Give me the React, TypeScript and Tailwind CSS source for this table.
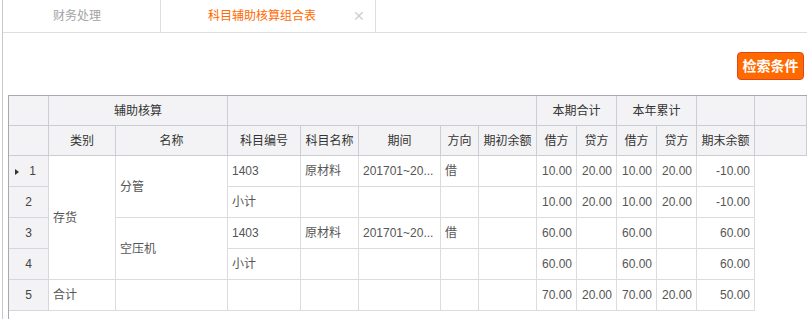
import React from "react";

const font = { fontFamily: '"Liberation Sans", "Noto Sans CJK SC", sans-serif' };

function H({ children, className = "" }: { children?: React.ReactNode; className?: string }) {
  return (
    <div
      className={
        "bg-[#f3f3f5] border-r border-b border-[#cbcdd4] text-[#333] text-[12px] flex items-center justify-center overflow-hidden whitespace-nowrap " +
        className
      }
    >
      {children}
    </div>
  );
}

function RH({ children, className = "" }: { children?: React.ReactNode; className?: string }) {
  return (
    <div
      className={
        "bg-[#f3f3f5] border-r border-b border-[#d6d7dd] text-[#444] text-[12px] flex items-center justify-center " +
        className
      }
    >
      {children}
    </div>
  );
}

function D({
  children,
  className = "",
  right = false,
}: {
  children?: React.ReactNode;
  className?: string;
  right?: boolean;
}) {
  return (
    <div
      className={
        "border-r border-b border-[#dcdcdf] text-[#555] text-[12px] flex items-center px-[4px] overflow-hidden whitespace-nowrap " +
        (right ? "justify-end " : "justify-start ") +
        className
      }
    >
      {children}
    </div>
  );
}

type Row = {
  code?: string;
  name?: string;
  period?: string;
  dir?: string;
  v: (string | undefined)[];
};

export default function App() {
  const rows: Row[] = [
    { code: "1403", name: "原材料", period: "201701~20...", dir: "借", v: ["10.00", "20.00", "10.00", "20.00", "-10.00"] },
    { code: "小计", v: ["10.00", "20.00", "10.00", "20.00", "-10.00"] },
    { code: "1403", name: "原材料", period: "201701~20...", dir: "借", v: ["60.00", "", "60.00", "", "60.00"] },
    { code: "小计", v: ["60.00", "", "60.00", "", "60.00"] },
    { v: ["70.00", "20.00", "70.00", "20.00", "50.00"] },
  ];

  return (
    <div className="w-[807px] h-[319px] overflow-hidden bg-white pl-[2px]" style={font}>
      <div className="h-full border-l border-[#c8c8cc] flex flex-col">
        {/* tab bar */}
        <div className="h-[33px] border-b border-[#dedee2] flex shrink-0">
          <div className="w-[158px] border-r border-[#dedee2] flex items-center pl-[50px] text-[12px] text-[#a3a3a3]">
            财务处理
          </div>
          <div className="w-[215px] border-r border-[#dedee2] flex items-center pl-[47px] pr-[10px] text-[12px] text-[#ff6a00]">
            <span>科目辅助核算组合表</span>
            <span className="ml-auto text-[#d0d0d0] text-[14px] leading-none">✕</span>
          </div>
        </div>

        {/* toolbar */}
        <div className="flex justify-end pt-[19px] pr-[3px] shrink-0">
          <button className="h-[28px] w-[67px] rounded-[4px] bg-[#ff6a00] border border-[#e0451c] text-white text-[14px] font-bold flex items-center justify-center">
            检索条件
          </button>
        </div>

        {/* grid */}
        <div className="mt-[15px] ml-[5px] flex-1 border-l border-t border-[#a6a9b3]">
          <div className="grid grid-cols-[40px_67px_112px_73px_58px_82px_38px_58px_40px_40px_40px_40px_58px_1fr] grid-rows-[30px_30px_31px_31px_31px_31px_31px]">
            {/* header row 1 */}
            <H />
            <H className="col-span-2">辅助核算</H>
            <H className="col-span-5" />
            <H className="col-span-2">本期合计</H>
            <H className="col-span-2">本年累计</H>
            <H />
            <H />

            {/* header row 2 */}
            <H />
            <H>类别</H>
            <H>名称</H>
            <H>科目编号</H>
            <H>科目名称</H>
            <H>期间</H>
            <H>方向</H>
            <H>期初余额</H>
            <H>借方</H>
            <H>贷方</H>
            <H>借方</H>
            <H>贷方</H>
            <H>期末余额</H>
            <H />

            {/* row headers */}
            <RH className="col-start-1 row-start-3 relative">
              <span className="absolute left-[6px] top-[13px] w-0 h-0 border-y-[3px] border-y-transparent border-l-[4px] border-l-[#333]" />
              <span className="ml-[8px]">1</span>
            </RH>
            <RH className="col-start-1 row-start-4">2</RH>
            <RH className="col-start-1 row-start-5">3</RH>
            <RH className="col-start-1 row-start-6">4</RH>
            <RH className="col-start-1 row-start-7">5</RH>

            {/* merged cells */}
            <D className="col-start-2 row-start-3 row-span-4">存货</D>
            <D className="col-start-3 row-start-3 row-span-2">分管</D>
            <D className="col-start-3 row-start-5 row-span-2">空压机</D>
            <D className="col-start-2 row-start-7">合计</D>
            <D className="col-start-3 row-start-7" />

            {rows.map((r, i) => {
              const rs = ["row-start-3", "row-start-4", "row-start-5", "row-start-6", "row-start-7"][i];
              return (
                <React.Fragment key={i}>
                  <D className={"col-start-4 " + rs}>{r.code}</D>
                  <D className={"col-start-5 " + rs}>{r.name}</D>
                  <D className={"col-start-6 " + rs}>{r.period}</D>
                  <D className={"col-start-7 " + rs}>{r.dir}</D>
                  <D className={"col-start-8 " + rs} />
                  <D right className={"col-start-9 " + rs}>{r.v[0]}</D>
                  <D right className={"col-start-10 " + rs}>{r.v[1]}</D>
                  <D right className={"col-start-11 " + rs}>{r.v[2]}</D>
                  <D right className={"col-start-12 " + rs}>{r.v[3]}</D>
                  <D right className={"col-start-13 " + rs}>{r.v[4]}</D>
                </React.Fragment>
              );
            })}
          </div>
        </div>
      </div>
    </div>
  );
}
